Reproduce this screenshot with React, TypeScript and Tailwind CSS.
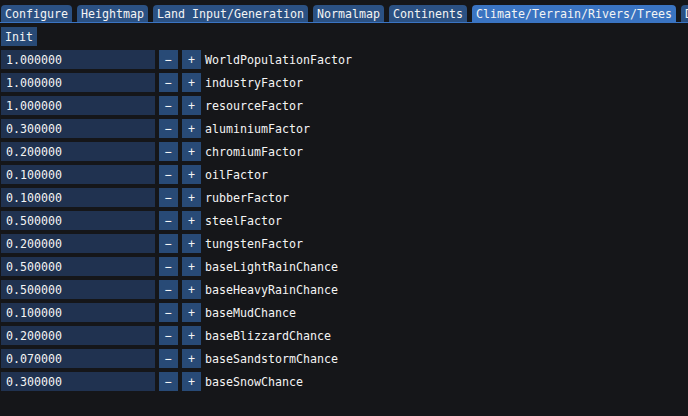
import React from "react";

const rows: [string, string][] = [
  ["1.000000", "WorldPopulationFactor"],
  ["1.000000", "industryFactor"],
  ["1.000000", "resourceFactor"],
  ["0.300000", "aluminiumFactor"],
  ["0.200000", "chromiumFactor"],
  ["0.100000", "oilFactor"],
  ["0.100000", "rubberFactor"],
  ["0.500000", "steelFactor"],
  ["0.200000", "tungstenFactor"],
  ["0.500000", "baseLightRainChance"],
  ["0.500000", "baseHeavyRainChance"],
  ["0.100000", "baseMudChance"],
  ["0.200000", "baseBlizzardChance"],
  ["0.070000", "baseSandstormChance"],
  ["0.300000", "baseSnowChance"],
];

const tabs = [
  "Configure",
  "Heightmap",
  "Land Input/Generation",
  "Normalmap",
  "Continents",
  "Climate/Terrain/Rivers/Trees",
  "D",
];

export default function App() {
  return (
    <div
      className="w-[688px] h-[416px] bg-[#151619] text-[#f4f4f4] overflow-hidden text-[11.63px] leading-[13px]"
      style={{ fontFamily: '"DejaVu Sans Mono", "Liberation Mono", monospace' }}
    >
      <div className="pt-[5px]">
        <div className="flex gap-[5px] pl-[1px] whitespace-nowrap overflow-hidden">
          {tabs.map((t) => (
            <div
              key={t}
              className={
                "shrink-0 h-[17px] px-[4px] pt-[3px] rounded-t-[4px] " +
                (t === "Climate/Terrain/Rivers/Trees" ? "bg-[#3a74c2]" : "bg-[#2b5183]")
              }
            >
              {t}
            </div>
          ))}
        </div>
        <div className="h-[1px] bg-[#3a74c2]" />
      </div>
      <div className="pl-[1px] pt-[4px] flex flex-col gap-[4px]">
        <div className="flex">
          <div className="h-[19px] px-[4px] pt-[4px] bg-[#284a76]">Init</div>
        </div>
        {rows.map(([v, l]) => (
          <div key={l} className="flex gap-[4px] items-center">
            <div className="w-[154px] h-[19px] pl-[5px] pt-[4px] bg-[#203250]">{v}</div>
            <div className="w-[19px] h-[19px] bg-[#284a76] flex items-center justify-center pt-[1px]">−</div>
            <div className="w-[19px] h-[19px] bg-[#284a76] flex items-center justify-center pt-[1px]">+</div>
            <div className="pt-[2px]">{l}</div>
          </div>
        ))}
      </div>
    </div>
  );
}
